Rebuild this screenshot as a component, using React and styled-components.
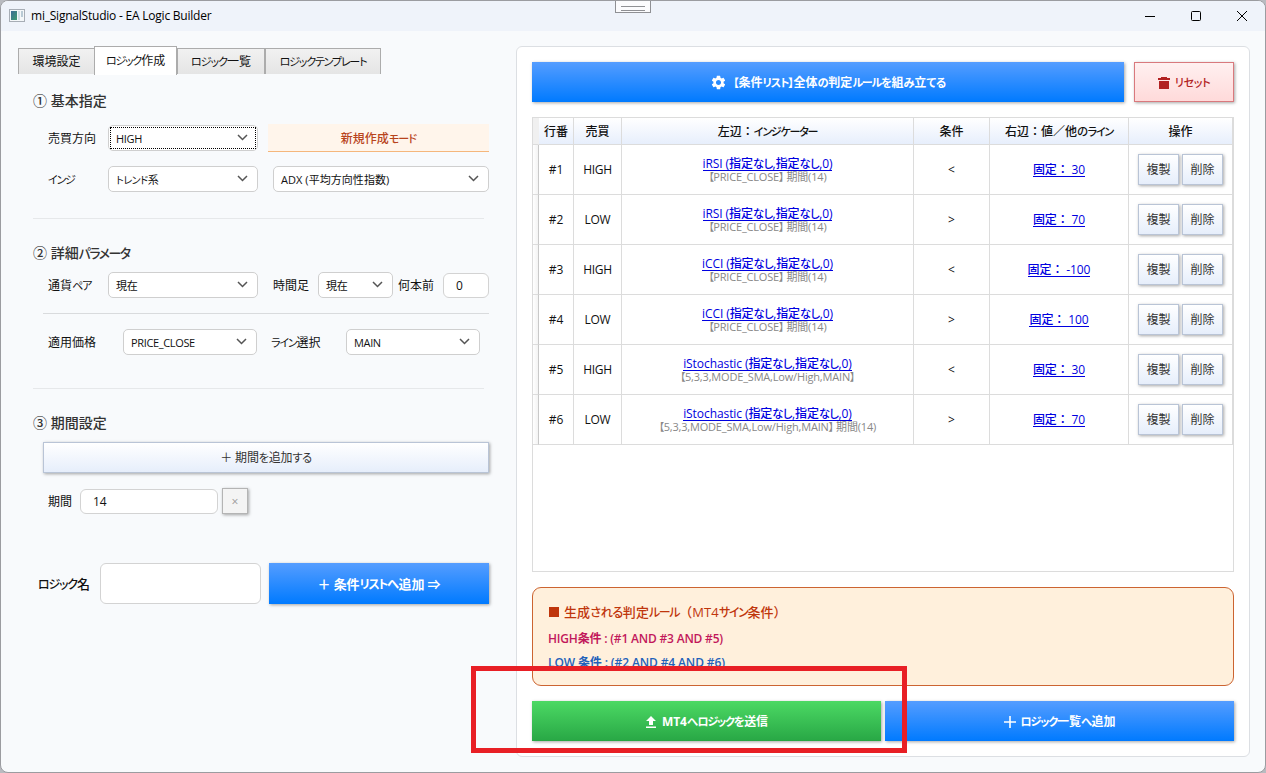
import styled, { createGlobalStyle, css } from 'styled-components'
import { MdSettings } from 'react-icons/md'

const GlobalStyle = createGlobalStyle`
  * { box-sizing: border-box; }

  body {
    margin: 0;
    background: #b9bbc0;
    color: #111;
    font-family: "Open Sans", "Noto Sans CJK JP", sans-serif;
    font-size: 12px;
  }
`

/* ---------- text ---------- */

const Kana = styled.span`
  font-feature-settings: "palt";
  font-size: ${({ $katakana }) => ($katakana ? 0.92 : 0.94)}em;
  letter-spacing: calc(${({ $katakana }) => ($katakana ? -0.11 : -0.04)}em + ${({ $extra }) => $extra}px);
`

const Line = styled.span`
  display: inline-block;
  white-space: pre;
  line-height: 16px;
  letter-spacing: ${({ track = 0 }) => track}px;
`

// kana and brackets run narrower than kanji in UI fonts
const Text = ({ children, track, kana = 0 }) => (
  <Line track={track}>
    {children.split(/([\u30a1-\u30ff]+|[\u3041-\u309f【】]+)/).map((part, i) => (
      i % 2 ? <Kana key={i} $katakana={/[\u30a1-\u30ff]/.test(part)} $extra={kana}>{part}</Kana> : part
    ))}
  </Line>
)

/* ---------- window frame ---------- */

const Window = styled.div`
  position: relative;
  width: 1266px;
  height: 773px;
  overflow: hidden;
  background: #f8fafc;
  border: 1px solid #9b9ca0;
  border-radius: 8px;
`

const TitleBar = styled.header`
  display: flex;
  align-items: center;
  height: 30px;
  padding: 0 17px 1px 8px;
  background: #eff3fa;
  color: #000;
`

const Title = styled.div`
  flex: 1;
  padding-left: 6px;
`

const WindowButtons = styled.div`
  display: flex;
  gap: 34px;

  svg { display: block; }
`

const Handle = styled.div`
  position: absolute;
  top: -1px;
  left: 614px;
  width: 36px;
  height: 13px;
  padding: 5px 5px 0;
  background: #fbfbfd;
  border: 1px solid #8f9094;

  &::before {
    content: "";
    display: block;
    height: 3px;
    border-top: 1px solid #8f9094;
    border-bottom: 1px solid #8f9094;
  }
`

const Body = styled.main`
  display: flex;
  align-items: flex-start;
  padding: 15px 15px 0 17px;
`

/* ---------- left side ---------- */

const Left = styled.section`
  width: 498px;
`

const Tabs = styled.nav`
  display: flex;
  align-items: flex-end;
  height: 29px;
`

const Tab = styled.div`
  display: flex;
  align-items: center;
  justify-content: center;
  width: ${({ $width }) => $width}px;
  height: 26px;
  margin-bottom: 1px;
  background: linear-gradient(#f1f1f1, #e5e5e5);
  border: 1px solid #acacac;
  border-bottom: 0;

  & + & { border-left-width: ${({ $joined }) => ($joined ? 0 : 1)}px; }

  ${({ $active }) => $active && css`
    height: 29px;
    margin: 0 0 0 -1px;
    background: #fff;
    border-color: #acacac;
  `}
`

const Heading = styled.h2`
  margin: ${({ $top }) => $top}px 0 0 15px;
  height: 20px;
  line-height: 20px;
  color: #333;
  font-size: 14px;
  font-weight: 500;

  ${Line} { line-height: 20px; }
`

const Row = styled.div`
  display: flex;
  align-items: center;
  height: ${({ $height = 26 }) => $height}px;
  margin-top: ${({ $top }) => $top}px;
  padding-left: ${({ $indent = 30 }) => $indent}px;
`

const Label = styled.div`
  width: ${({ $width }) => $width}px;
  flex: none;
  font-size: ${({ $size = 12 }) => $size}px;
  font-weight: ${({ $weight = 400 }) => $weight};
`

const SelectBox = styled.div`
  position: relative;
  display: flex;
  align-items: center;
  justify-content: space-between;
  flex: none;
  width: ${({ $width }) => $width}px;
  height: 26px;
  margin-right: ${({ $gap = 0 }) => $gap}px;
  padding: 2px 9px 0 7px;
  background: #fff;
  border: 1px solid #cfcfcf;
  border-radius: 5px;
  font-size: 11px;

  svg { margin-top: -3px; }

  ${({ $focused }) => $focused && css`
    &::after {
      content: "";
      position: absolute;
      inset: 1px;
      border: 1px dotted #000;
    }
  `}
`

const Select = ({ children, width, gap, focused, track = -0.35 }) => (
  <SelectBox $width={width} $gap={gap} $focused={focused}>
    <Text track={track} kana={0.6}>{children}</Text>
    <svg width="11" height="7" viewBox="0 0 11 7" fill="none" stroke="#555" strokeWidth="1.5">
      <path d="M1 1l4.5 4.5L10 1" />
    </svg>
  </SelectBox>
)

const Input = styled.div`
  display: flex;
  align-items: center;
  flex: none;
  width: ${({ $width }) => $width}px;
  height: ${({ $height = 25 }) => $height}px;
  padding: 2px 12px 0;
  background: #fff;
  border: 1px solid #d3d3d3;
  border-radius: 6px;
`

const Mode = styled.div`
  width: 221px;
  height: 28px;
  margin-left: 10px;
  padding-top: 6px;
  background: #fff5eb;
  border-bottom: 1px solid #f5b77c;
  color: #b8441c;
  font-weight: 500;
  text-align: center;
`

const Rule = styled.div`
  width: ${({ $width = 451 }) => $width}px;
  height: 1px;
  margin: ${({ $top }) => $top}px 0 0 ${({ $indent = 15 }) => $indent}px;
  background: ${({ $dark }) => ($dark ? '#d9dbdd' : '#e6e8ea')};
`

/* ---------- buttons ---------- */

const skins = {
  blue: css`
    background: linear-gradient(#559dff, #007aff);
    color: #fff;
  `,
  green: css`
    background: linear-gradient(#4cd964, #28a745);
    color: #fff;
  `,
  red: css`
    background: linear-gradient(#fff0f0, #ffdada);
    border: 1px solid #d9797d;
    color: #b22222;
  `,
  light: css`
    background: linear-gradient(#fff, #e6eefb);
    border: 1px solid #b9c4d6;
    color: #333;
  `,
  grey: css`
    background: #f4f4f4;
    border: 1px solid #b4b4b4;
    color: #999;
  `,
}

const Button = styled.div`
  display: flex;
  align-items: center;
  justify-content: center;
  flex: none;
  gap: ${({ $gap = 6 }) => $gap}px;
  width: ${({ $width }) => $width}px;
  height: ${({ $height = 40 }) => $height}px;
  margin-left: ${({ $left = 0 }) => $left}px;
  padding-top: 1px;
  box-shadow: 1px 1px 3px rgba(0, 0, 0, 0.35);
  font-weight: ${({ $weight = 700 }) => $weight};
  font-size: ${({ $size = 12 }) => $size}px;

  ${({ $skin }) => skins[$skin]}
`

/* ---------- right side ---------- */

const Panel = styled.section`
  width: 734px;
  height: 711px;
  padding: 15px;
  background: #fff;
  border: 1px solid #dcdfe3;
  border-radius: 6px;
`

const Bar = styled.div`
  display: flex;
  justify-content: space-between;
  width: 702px;
`

const Table = styled.div`
  width: 702px;
  height: 455px;
  margin-top: 15px;
  border: 1px solid #dcdcdc;
`

const TableRow = styled.div`
  display: grid;
  grid-template-columns: 6px 35px 48px 292px 76px 139px 104px;
  height: ${({ $head }) => ($head ? 27 : 50)}px;
  background: ${({ $head }) => ($head ? 'linear-gradient(#fff, #e6eefc)' : '#fff')};
  font-weight: ${({ $head }) => ($head ? 500 : 400)};
`

const Cell = styled.div`
  display: flex;
  align-items: center;
  justify-content: center;
  flex-direction: ${({ $stack }) => ($stack ? 'column' : 'row')};
  padding-top: 1px;
  border-right: 1px solid #dcdcdc;
  border-bottom: 1px solid #dcdcdc;
  white-space: nowrap;
`

const Actions = styled(Cell)`
  gap: 3px;
  padding-top: 0;
`

const Grip = styled(Cell)`
  background: ${({ $head }) => ($head ? '#f0f0f0' : 'linear-gradient(90deg, #fff, #f3f3f3)')};
  border-right-color: ${({ $head }) => ($head ? '#f0f0f0' : '#c9c9c9')};
`

const Link = styled.a`
  color: #0000e0;
  font-weight: 500;
  line-height: 14px;

  ${Line} {
    height: 14px;
    line-height: 14px;
    border-bottom: 1px solid #0000e0;
  }
`

const Note = styled.div`
  color: #888;
  font-size: 11px;
  line-height: 12px;

  ${Line} { line-height: 12px; }
`

const RuleBox = styled.div`
  width: 702px;
  height: 99px;
  margin: 15px 0;
  padding: 14px 15px;
  background: #fff0dc;
  border: 1px solid #cc6431;
  border-radius: 9px;
`

const RuleTitle = styled.div`
  display: flex;
  align-items: center;
  gap: 5px;
  height: 20px;
  color: #bf360c;
  font-size: 13px;
  font-weight: 500;

  &::before {
    content: "";
    width: 10px;
    height: 10px;
    margin-left: 1px;
    background: #bf360c;
  }
`

const RuleLine = styled.div`
  height: 16px;
  margin-top: 8px;
  color: ${({ $color }) => $color};
  font-weight: 600;
`

const Marker = styled.div`
  position: absolute;
  left: 470px;
  top: 665px;
  width: 436px;
  height: 87px;
  border: 5px solid #e81f25;
`

/* ---------- icons ---------- */

const AppIcon = () => (
  <svg width="16" height="13" viewBox="0 0 16 13">
    <defs>
      <linearGradient id="screen" x1="0" y1="0" x2="1" y2="1">
        <stop offset="0" stopColor="#3c6c96" />
        <stop offset="1" stopColor="#3f9b70" />
      </linearGradient>
    </defs>
    <rect x=".5" y=".5" width="15" height="12" fill="#f4f7f9" stroke="#a7adb5" />
    <rect x="2" y="2" width="6" height="9" fill="url(#screen)" />
    <rect x="9" y="2" width="2" height="9" fill="#d3dfe6" />
    <rect x="12" y="2" width="2" height="6" fill="#b9cad5" />
  </svg>
)

const TrashIcon = () => (
  <svg width="12" height="12" viewBox="0 0 12 12" fill="currentColor">
    <path d="M3 0h6v1h3v2H0V1h3zM1 4h10v8H1z" />
  </svg>
)

const UploadIcon = () => (
  <svg width="12" height="12" viewBox="0 0 12 12" fill="currentColor">
    <path d="M6 0l5 5H8v4H4V5H1zM1 10.5h10V12H1z" />
  </svg>
)

const PlusIcon = () => (
  <svg width="12" height="12" viewBox="0 0 12 12" stroke="currentColor" strokeWidth="1.6">
    <path d="M6 0v12M0 6h12" />
  </svg>
)

const rows = [
  { side: 'HIGH', name: 'iRSI', note: '【PRICE_CLOSE】 期間(14)', op: '<', value: '30' },
  { side: 'LOW', name: 'iRSI', note: '【PRICE_CLOSE】 期間(14)', op: '>', value: '70' },
  { side: 'HIGH', name: 'iCCI', note: '【PRICE_CLOSE】 期間(14)', op: '<', value: '-100' },
  { side: 'LOW', name: 'iCCI', note: '【PRICE_CLOSE】 期間(14)', op: '>', value: '100' },
  { side: 'HIGH', name: 'iStochastic', note: '【5,3,3,MODE_SMA,Low/High,MAIN】', op: '<', value: '30' },
  { side: 'LOW', name: 'iStochastic', note: '【5,3,3,MODE_SMA,Low/High,MAIN】 期間(14)', op: '>', value: '70' },
]

const LogicForm = () => (
  <Left>
    <Tabs>
      <Tab $width={77}><Text>環境設定</Text></Tab>
      <Tab $width={83} $active><Text>ロジック作成</Text></Tab>
      <Tab $width={88} $joined><Text kana={0.2}>ロジック一覧</Text></Tab>
      <Tab $width={116}><Text>ロジックテンプレート</Text></Tab>
    </Tabs>

    <Heading $top={16}><Text>① 基本指定</Text></Heading>
    <Row $top={13} $height={28}>
      <Label $width={60}><Text>売買方向</Text></Label>
      <Select width={150} focused>HIGH</Select>
      <Mode><Text kana={0.3}>新規作成モード</Text></Mode>
    </Row>
    <Row $top={14}>
      <Label $width={60}><Text>インジ</Text></Label>
      <Select width={150} gap={15}>トレンド系</Select>
      <Select width={216} track={0.05}>ADX (平均方向性指数)</Select>
    </Row>
    <Rule $top={26} />

    <Heading $top={24}><Text>② 詳細パラメータ</Text></Heading>
    <Row $top={9}>
      <Label $width={60}><Text>通貨ペア</Text></Label>
      <Select width={150} gap={15}>現在</Select>
      <Label $width={45}><Text>時間足</Text></Label>
      <Select width={75} gap={5}>現在</Select>
      <Label $width={45}><Text>何本前</Text></Label>
      <Input $width={46}><Text>0</Text></Input>
    </Row>
    <Rule $top={15} $indent={25} $width={446} $dark />
    <Row $top={15}>
      <Label $width={75}><Text>適用価格</Text></Label>
      <Select width={134} gap={14}>PRICE_CLOSE</Select>
      <Label $width={75}><Text>ライン選択</Text></Label>
      <Select width={134}>MAIN</Select>
    </Row>
    <Rule $top={33} />

    <Heading $top={24}><Text>③ 期間設定</Text></Heading>
    <Row $top={9} $height={31} $indent={25}>
      <Button $skin="light" $width={446} $height={31} $weight={400}><Text track={-0.2}>＋ 期間を追加する</Text></Button>
    </Row>
    <Row $top={15}>
      <Label $width={32}><Text>期間</Text></Label>
      <Input $width={138}><Text>14</Text></Input>
      <Button $skin="grey" $width={26} $height={26} $left={4} $weight={400} $size={12}><Text>×</Text></Button>
    </Row>
    <Row $top={49} $height={41} $indent={20}>
      <Label $width={62} $size={13} $weight={500}><Text kana={0.2}>ロジック名</Text></Label>
      <Input $width={161} $height={41} />
      <Button $skin="blue" $width={220} $height={41} $left={8} $size={13}><Text track={-0.1}>＋ 条件リストへ追加 ⇒</Text></Button>
    </Row>
  </Left>
)

const ConditionList = () => (
  <Panel>
    <Bar>
      <Button $skin="blue" $width={592}>
        <MdSettings size={17} />
        <Text kana={0.1}>【条件リスト】全体の判定ルールを組み立てる</Text>
      </Button>
      <Button $skin="red" $width={100} $weight={500} $gap={5}>
        <TrashIcon />
        <Text kana={0.9}>リセット</Text>
      </Button>
    </Bar>

    <Table>
      <TableRow $head>
        <Grip $head />
        <Cell><Text>行番</Text></Cell>
        <Cell><Text>売買</Text></Cell>
        <Cell><Text>左辺：インジケーター</Text></Cell>
        <Cell><Text>条件</Text></Cell>
        <Cell><Text>右辺：値／他のライン</Text></Cell>
        <Cell><Text>操作</Text></Cell>
      </TableRow>
      {rows.map((row, i) => (
        <TableRow key={i}>
          <Grip />
          <Cell><Text>{`#${i + 1}`}</Text></Cell>
          <Cell><Text track={-0.3}>{row.side}</Text></Cell>
          <Cell $stack>
            <Link><Text track={-0.08}>{`${row.name} (指定なし,指定なし,0)`}</Text></Link>
            <Note><Text track={-0.18}>{row.note}</Text></Note>
          </Cell>
          <Cell><Text>{row.op}</Text></Cell>
          <Cell><Link><Text track={-0.1}>{`固定： ${row.value}`}</Text></Link></Cell>
          <Actions>
            <Button $skin="light" $width={41} $height={31} $weight={400}><Text>複製</Text></Button>
            <Button $skin="light" $width={41} $height={31} $weight={400}><Text>削除</Text></Button>
          </Actions>
        </TableRow>
      ))}
    </Table>

    <RuleBox>
      <RuleTitle><Text track={0.1}>生成される判定ルール（MT4サイン条件）</Text></RuleTitle>
      <RuleLine $color="#c2185b"><Text track={-0.19}>HIGH条件 : (#1 AND #3 AND #5)</Text></RuleLine>
      <RuleLine $color="#1f62ba"><Text track={-0.12}>LOW 条件 : (#2 AND #4 AND #6)</Text></RuleLine>
    </RuleBox>

    <Bar>
      <Button $skin="green" $width={349} $gap={5}>
        <UploadIcon />
        <Text track={-0.1}>MT4へロジックを送信</Text>
      </Button>
      <Button $skin="blue" $width={349} $gap={5}>
        <PlusIcon />
        <Text>ロジック一覧へ追加</Text>
      </Button>
    </Bar>
  </Panel>
)

export default function App() {
  return (
    <>
      <GlobalStyle />
      <Window>
        <TitleBar>
          <AppIcon />
          <Title><Text track={-0.22}>mi_SignalStudio - EA Logic Builder</Text></Title>
          <WindowButtons>
            <svg width="12" height="12" viewBox="0 0 12 12" stroke="#000">
              <path d="M1 6.5h10" />
            </svg>
            <svg width="12" height="12" viewBox="0 0 12 12" fill="none" stroke="#000">
              <rect x="1.5" y="1.5" width="9" height="9" rx="1" />
            </svg>
            <svg width="12" height="12" viewBox="0 0 12 12" stroke="#000">
              <path d="M1 1l10 10M11 1L1 11" />
            </svg>
          </WindowButtons>
        </TitleBar>
        <Handle />
        <Body>
          <LogicForm />
          <ConditionList />
        </Body>
        <Marker />
      </Window>
    </>
  )
}
